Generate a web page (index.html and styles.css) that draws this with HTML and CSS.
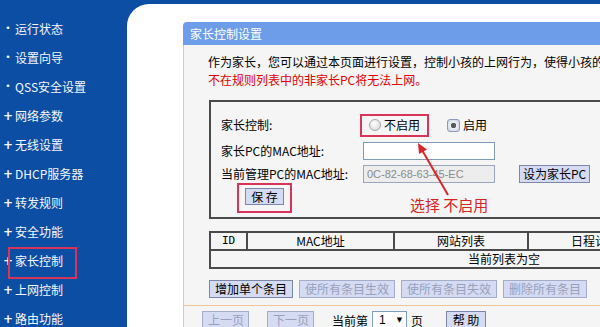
FILE: index.html
```html
<!DOCTYPE html>
<html lang="zh-CN">
  <head>
    <meta charset="UTF-8" />
    <meta name="viewport" content="width=device-width, initial-scale=1.0" />
    <title>家长控制设置</title>
    <link rel="stylesheet" href="styles.css">
  </head>
  <body>
    <div class="frame">
      <aside class="sidebar">
        <ul class="menu">
          <li><span class="mark dot">•</span>运行状态</li>
          <li><span class="mark dot">•</span>设置向导</li>
          <li><span class="mark dot">•</span>QSS安全设置</li>
          <li><span class="mark">+</span>网络参数</li>
          <li><span class="mark">+</span>无线设置</li>
          <li><span class="mark">+</span>DHCP服务器</li>
          <li><span class="mark">+</span>转发规则</li>
          <li><span class="mark">+</span>安全功能</li>
          <li class="current"><span class="mark">+</span>家长控制</li>
          <li><span class="mark">+</span>上网控制</li>
          <li><span class="mark">+</span>路由功能</li>
        </ul>
      </aside>

      <main class="content">
        <section class="panel">
          <h1 class="panel-title">家长控制设置</h1>
          <div class="panel-body">
            <div class="panel-main">
              <p class="intro">作为家长，您可以通过本页面进行设置，控制小孩的上网行为，使得小孩的PC只能在指定时间访问指定的网站，</p>
              <p class="intro warn">不在规则列表中的非家长PC将无法上网。</p>

              <form class="control-box">
                <div class="field field-radio">
                  <span class="label">家长控制:</span>
                  <label class="opt marked"><span class="radio"></span>不启用</label>
                  <label class="opt"><span class="radio checked"></span>启用</label>
                </div>
                <div class="field">
                  <span class="label">家长PC的MAC地址:</span>
                  <input class="text-input" type="text" />
                </div>
                <div class="field">
                  <span class="label">当前管理PC的MAC地址:</span>
                  <input class="text-input" type="text" value="0C-82-68-63-45-EC" disabled />
                  <button type="button" class="btn btn-set">设为家长PC</button>
                </div>
                <div class="field field-save">
                  <span class="save-mark"><button type="button" class="btn btn-save">保 存</button></span>
                </div>

                <!-- annotation drawn over the form -->
                <svg class="arrow" width="50" height="65" viewBox="0 0 50 65">
                  <line x1="42" y1="58" x2="16" y2="13" stroke="#d9262a" stroke-width="2" />
                  <polygon points="12,6 21,12.5 13,17" fill="#d9262a" />
                </svg>
                <span class="note">选择 不启用</span>
              </form>

              <table class="rules">
                <tr>
                  <th class="col-id">ID</th>
                  <th class="col-mac">MAC地址</th>
                  <th class="col-site">网站列表</th>
                  <th class="col-plan">日程计划</th>
                  <th>状态</th>
                  <th>编辑</th>
                </tr>
                <tr>
                  <td colspan="6">当前列表为空</td>
                </tr>
              </table>

              <div class="actions">
                <button type="button" class="btn">增加单个条目</button>
                <button type="button" class="btn" disabled>使所有条目生效</button>
                <button type="button" class="btn" disabled>使所有条目失效</button>
                <button type="button" class="btn" disabled>删除所有条目</button>
              </div>
            </div>

            <div class="pager">
              <button type="button" class="btn btn-page" disabled>上一页</button>
              <button type="button" class="btn btn-page next" disabled>下一页</button>
              <span class="page-text">当前第</span>
              <span class="select">1<span class="caret">▼</span></span>
              <span class="page-unit">页</span>
              <button type="button" class="btn btn-help">帮 助</button>
            </div>
          </div>
        </section>
      </main>
    </div>
  </body>
</html>
```

FILE: styles.css
```css
* {
  margin: 0;
  padding: 0;
  box-sizing: border-box;
}

:root {
  --frame: #0b4ea3;
  --bar: #6d9de9;
  --panel: #f5f5f5;
  --peach: #f2c495;
  --line: #4a4a4a;
  --btn: #d5dbf3;
  --btn-border: #7b86aa;
  --mark: #d8345a;
}

body {
  background: var(--frame);
  font-family: "Noto Sans CJK SC", "DejaVu Sans", sans-serif;
  font-size: 12px;
  color: #000;
  overflow: hidden;
}

.frame {
  display: flex;
  height: 327px;
}

/* Sidebar menu */
.sidebar {
  width: 127px;
  flex: none;
  padding-top: 14px;
}

.menu {
  list-style: none;
}

.menu li {
  position: relative;
  display: flex;
  align-items: center;
  height: 29px;
  padding-left: 2px;
  color: #f4f7ff;
  line-height: 1;
}

.mark {
  width: 12px;
  margin-right: 1px;
  text-align: center;
  font-family: "DejaVu Sans", sans-serif;
  font-weight: bold;
  font-size: 12px;
}

.mark.dot {
  font-size: 9px;
  font-weight: normal;
}

.menu li.current::after {
  content: "";
  position: absolute;
  left: 8px;
  top: 1px;
  width: 65px;
  height: 28px;
  border: 2px solid var(--mark);
}

/* Content area */
.content {
  flex: 1;
  margin-top: 4px;
  background: #fff;
  border-top-left-radius: 22px;
  padding: 18px 0 0 56px;
  overflow: hidden;
}

.panel {
  width: 660px;
}

.panel-title {
  height: 23px;
  line-height: 23px;
  padding-left: 7px;
  background: var(--bar);
  color: #fff;
  font-size: 12px;
  font-weight: normal;
  border-top-left-radius: 4px;
}

.panel-body {
  background: var(--panel);
  border-left: 1px solid var(--peach);
  height: 300px;
}

.panel-main {
  padding: 8px 0 7px 24px;
}

.intro {
  line-height: 18px;
  white-space: nowrap;
}

.warn {
  color: #e20000;
}

/* Form box */
.control-box {
  position: relative;
  width: 590px;
  margin: 11px 0 0 1px;
  border: 2px solid var(--line);
  padding: 11px 0 4px 10px;
}

.field {
  display: flex;
  align-items: center;
  height: 18px;
  margin-top: 5px;
}

.field-radio {
  height: 24px;
  margin-top: 0;
}

.field-save {
  height: 30px;
  margin-top: 0;
}

.label {
  width: 142px;
  flex: none;
  line-height: 1;
}

.opt {
  display: flex;
  align-items: center;
  gap: 3px;
  height: 23px;
  line-height: 1;
}

.opt.marked {
  margin-left: -3px;
  padding: 0 7px 0 7px;
  border: 2px solid var(--mark);
}

.opt + .opt {
  margin-left: 18px;
}

.radio {
  width: 12px;
  height: 12px;
  border: 1px solid #a6a6a6;
  border-radius: 50%;
  background: radial-gradient(circle at 40% 35%, #fff, #d4d4d4);
}

.radio.checked {
  width: 13px;
  height: 13px;
  border-radius: 3px;
  border-color: #8d99b8;
  background: radial-gradient(circle, #5a5a5a 0 2.5px, #eef0f6 3px, #c9d0e2);
}

.text-input {
  width: 132px;
  height: 18px;
  border: 1px solid #7f9db9;
  background: #fff;
  padding: 0 3px;
  font-family: "Liberation Sans", sans-serif;
  font-size: 11px;
}

.text-input:disabled {
  background: #ededed;
  border-color: #9aa6c0;
  color: #8a8a8a;
}

.btn {
  height: 18px;
  padding: 0 5px;
  border: 1px solid var(--btn-border);
  background: var(--btn);
  font-family: "Noto Sans CJK SC", sans-serif;
  font-size: 12px;
  line-height: 16px;
  color: #000;
  white-space: nowrap;
}

.btn:disabled {
  color: #98a0bb;
  border-color: #a3acc8;
}

.btn-set {
  margin-left: 24px;
  padding: 0 3px;
  font-family: "Noto Sans CJK SC", "Liberation Sans", sans-serif;
}

.save-mark {
  display: flex;
  margin-left: 16px;
  padding: 3px 6px 6px 6px;
  border: 2px solid var(--mark);
}

.btn-save {
  width: 39px;
  height: 17px;
}

.arrow {
  position: absolute;
  left: 195px;
  top: 35px;
}

.note {
  position: absolute;
  left: 199px;
  top: 95px;
  color: #d42424;
  font-size: 15px;
  line-height: 16px;
}

/* Rules table */
.rules {
  width: 590px;
  margin: 12px 0 0 1px;
  border-collapse: collapse;
  border: 2px solid var(--line);
  table-layout: fixed;
}

.rules th,
.rules td {
  border: 2px solid var(--line);
  height: 18px;
  padding: 0;
  font-weight: normal;
  text-align: center;
  line-height: 16px;
}

.col-id {
  width: 37px;
  font-family: "DejaVu Sans Mono", monospace;
  font-size: 11px;
}

.col-mac {
  width: 147px;
}

.col-site {
  width: 134px;
}

.col-plan {
  width: 134px;
}

/* Action buttons */
.actions {
  display: flex;
  gap: 6px;
  margin: 11px 0 0 1px;
}

/* Pager */
.pager {
  display: flex;
  align-items: center;
  border-top: 1px solid var(--peach);
  padding: 5px 0 0 18px;
}

.btn-page {
  width: 47px;
}

.next,
.page-text {
  margin-left: 18px;
}

.select {
  display: flex;
  align-items: center;
  justify-content: space-between;
  width: 35px;
  height: 18px;
  margin-left: 4px;
  padding: 0 4px 0 6px;
  border: 1px solid #7f9db9;
  background: #fff;
  font-family: "Liberation Sans", sans-serif;
}

.caret {
  font-family: "DejaVu Sans", sans-serif;
  font-size: 7px;
}

.page-unit {
  margin-left: 4px;
}

.btn-help {
  width: 40px;
  margin-left: 23px;
}
```
